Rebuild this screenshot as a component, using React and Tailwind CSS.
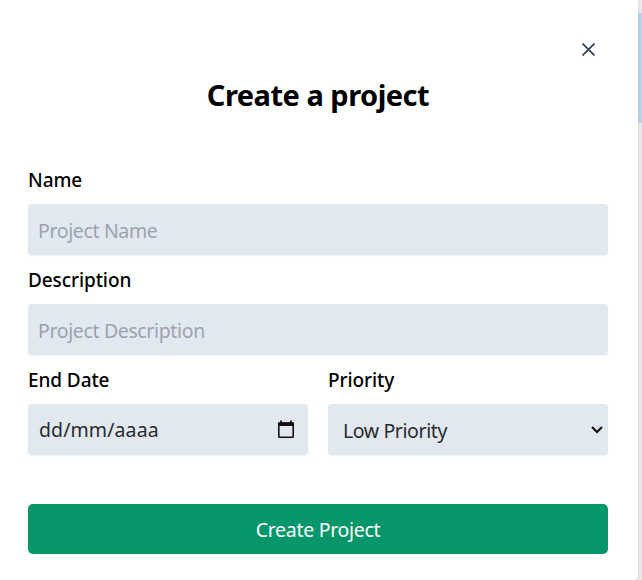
const field =
  "block h-[50.5px] w-full rounded bg-[#e2e8f0] px-[10px] pt-[2px] text-[19.5px] tracking-[-0.36px] text-[#292b2e] shadow-xs outline-none placeholder:text-[#9ca3af]";

function Field({ label, children }) {
  return (
    <label className="block h-[100px] min-w-0">
      <span className="block h-[34px] text-[19px] font-medium leading-[20px] tracking-[-0.09px] text-black">{label}</span>
      {children}
    </label>
  );
}

function CalendarIcon() {
  return (
    <svg className="h-[19px] w-[18px] shrink-0" viewBox="0 0 18 19" fill="none">
      <path d="M2.5 3H15.5Q16.2 3 16.2 4V16.5Q16.2 17.2 15.5 17.2H2.5Q1.8 17.2 1.8 16.5V4Q1.8 3 2.5 3Z" stroke="#101010" strokeWidth="1.6" />
      <path d="M1 2.5H17V6H1ZM3.2 .5H5V3H3.2ZM13 .5H14.8V3H13Z" fill="#101010" />
    </svg>
  );
}

export default function App() {
  return (
    <div className="flex h-[580px] w-[642px] overflow-hidden bg-[#e8e8ec] font-['Noto_Sans','Open_Sans',sans-serif]">
      <main className="z-10 h-[581px] w-[638px] shrink-0 rounded-br-md rounded-tr-[2px] bg-white pl-7 pr-[30px] shadow-md">
        <div className="flex h-[80px] justify-end pr-[13px] pt-[43px]">
          <button aria-label="Close" className="h-[13px] w-[13px]">
            <svg className="h-[13px] w-[13px]" viewBox="0 0 13 13" fill="none" stroke="#334155" strokeWidth="1.7">
              <path d="M.5 .5L12.5 12.5M12.5 .5L.5 12.5" />
            </svg>
          </button>
        </div>
        <h1 className="h-[90px] text-center text-[29px] font-bold leading-[30px] tracking-[-0.5px] text-black">Create a project</h1>
        <form>
          <Field label="Name">
            <input className={field} placeholder="Project Name" />
          </Field>
          <Field label="Description">
            <input className={field} placeholder="Project Description" />
          </Field>
          <div className="grid grid-cols-2 gap-5">
            <Field label="End Date">
              <span className="flex h-[50.5px] items-center justify-between rounded bg-[#e2e8f0] pl-[11px] pr-[13px] shadow-xs">
                <span className="text-[19.5px] leading-[27px] tracking-[0.1px] text-[#292b2e]">dd/mm/aaaa</span>
                <CalendarIcon />
              </span>
            </Field>
            <Field label="Priority">
              <span className="flex h-[50.5px] items-center justify-between rounded bg-[#e2e8f0] pl-[15px] pr-[5px] shadow-xs">
                <span className="pt-[2px] text-[19.5px] leading-[27px] tracking-[-0.4px] text-[#292b2e]">Low Priority</span>
                <svg className="h-[9px] w-[12px]" viewBox="0 0 12 9" fill="none" stroke="#101010" strokeWidth="2.2">
                  <path d="M1 2L6 7L11 2" />
                </svg>
              </span>
            </Field>
          </div>
          <button type="button" className="mt-[34px] block h-[50px] w-full rounded-[5px] bg-[#059669] pt-[2px] text-[19.5px] tracking-[-0.3px] text-white">
            Create Project
          </button>
        </form>
      </main>
      <aside className="h-[580px] w-1 bg-[#ebebef] pt-[13px]">
        <div className="h-[110px] bg-[#bfd3ef]" />
      </aside>
    </div>
  );
}
